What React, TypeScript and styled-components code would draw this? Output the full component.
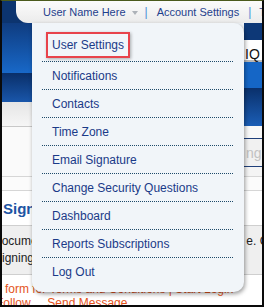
import styled, { createGlobalStyle } from "styled-components";

const GlobalStyle = createGlobalStyle`
  html, body {
    margin: 0;
    padding: 0;
    background: #fff;
  }
  body {
    font-family: "Liberation Sans", Arial, sans-serif;
  }
`;

const Frame = styled.div`
  position: relative;
  width: 264px;
  height: 307px;
  box-sizing: border-box;
  border: 2px solid #0a0a0a;
  border-top: 1px solid #4b5a1c;
  overflow: hidden;
  display: flex;
  flex-direction: column;
  background: #fff;
`;

const TopStrip = styled.div`
  height: 22px;
  flex: none;
  display: flex;
  padding-left: 14px;
  background: #0c346f;
`;

const Tab = styled.div`
  flex: 1;
  display: flex;
  align-items: center;
  padding-left: 27px;
  border-bottom-left-radius: 12px;
  background: linear-gradient(#fbfbfb, #ebebeb);
  white-space: nowrap;
  overflow: hidden;
  font-size: 11px;
  color: #1f3f8d;
`;

const Caret = styled.span`
  width: 0;
  height: 0;
  margin-left: 6px;
  margin-top: 2px;
  border-left: 3.5px solid transparent;
  border-right: 3.5px solid transparent;
  border-top: 4px solid #adb2b8;
`;

const Pipe = styled.span<{ $left: number; $right: number }>`
  margin: 0 ${(p) => p.$right}px 0 ${(p) => p.$left}px;
  color: #4a8fd6;
  font-size: 12px;
`;

const Banner = styled.div`
  height: 153px;
  flex: none;
  display: flex;
`;

const Column = styled.div<{ $width: number }>`
  width: ${(p) => p.$width}px;
  flex: none;
  display: flex;
  flex-direction: column;
  overflow: hidden;
`;

const Middle = styled.div`
  flex: 1;
  background: #f1f5f9;
`;

const Band = styled.div<{ $h: number; $bg: string; $line?: string }>`
  height: ${(p) => p.$h}px;
  flex: none;
  background: ${(p) => p.$bg};
  ${(p) => (p.$line ? `border-bottom: 1px solid ${p.$line};` : "")}
`;

const Fill = styled.div<{ $bg: string }>`
  flex: 1;
  background: ${(p) => p.$bg};
`;

const TitleBox = styled.div`
  height: 22px;
  flex: none;
  box-sizing: border-box;
  padding: 6px 0 0 1px;
  background: #fff;
  border-bottom: 2px solid #b9b9b9;
  font-size: 14px;
  line-height: 16px;
  color: #111;
  white-space: nowrap;
`;

const SearchBox = styled.div`
  height: 27px;
  flex: none;
  display: flex;
  align-items: center;
  padding-left: 2px;
  background: #f1f1f1;
  border-bottom: 1px solid #1f3f7a;
  font-size: 14px;
  color: #c2c2c2;
  white-space: nowrap;
`;

const ThinRow = styled.div`
  height: 13px;
  flex: none;
  background: #fbfbfb;
  border-top: 1px solid #d6d6d6;
  border-bottom: 1px solid #d6d6d6;
`;

const HeadingRow = styled.div`
  height: 34px;
  flex: none;
  display: flex;
  align-items: center;
  padding-left: 1px;
  background: #fff;
  border-bottom: 1px solid #cfcfcf;
  font-size: 15px;
  font-weight: bold;
  color: #1d55a3;
  white-space: nowrap;
`;

const DocsRow = styled.div`
  height: 49px;
  flex: none;
  box-sizing: border-box;
  padding-top: 7px;
  background: #efefef;
  border-bottom: 1px solid #cfcfcf;
  font-size: 12px;
  line-height: 17px;
  color: #222;
`;

const TextLine = styled.div<{ $indent: number }>`
  display: flex;
  justify-content: space-between;
  margin-left: ${(p) => p.$indent}px;
  white-space: nowrap;
`;

const Cut = styled.span`
  margin-right: -9px;
`;

const Footer = styled.div`
  flex: 1;
  padding-top: 7px;
  background: #fff;
  font-size: 12px;
  line-height: 14px;
  color: #e4541c;
`;

const FooterLine = styled.div<{ $indent: number }>`
  margin-left: ${(p) => p.$indent}px;
  white-space: nowrap;
`;

const Menu = styled.ul`
  position: absolute;
  left: 30px;
  top: 22px;
  width: 212px;
  box-sizing: border-box;
  margin: 0;
  padding: 11px 11px 7px 10px;
  list-style: none;
  background: #f1f5f9;
  border-radius: 0 10px 10px 10px;
  box-shadow: 1px 2px 4px rgba(0, 0, 0, 0.4);
`;

const MenuItem = styled.li`
  height: 27px;
  display: flex;
  align-items: center;
  padding-left: 10px;
  border-bottom: 1px dotted #1e4a6a;
  font-size: 12px;
  color: #1a3a88;
  white-space: nowrap;

  &:last-child {
    border-bottom: none;
  }
`;

const Highlight = styled.span`
  display: inline-block;
  margin: 0 0 5px -6px;
  padding: 4px;
  line-height: 14px;
  border: 2px solid #e8434b;
  box-shadow: 1px 1px 3px rgba(0, 0, 0, 0.3);
`;

const menuItems = [
  "Notifications",
  "Contacts",
  "Time Zone",
  "Email Signature",
  "Change Security Questions",
  "Dashboard",
  "Reports Subscriptions",
  "Log Out",
];

const App = () => {
  return (
    <>
      <GlobalStyle />
      <Frame>
        <TopStrip>
          <Tab>
            User Name Here
            <Caret />
            <Pipe $left={7} $right={9}>
              |
            </Pipe>
            Account Settings
            <Pipe $left={9} $right={8}>
              |
            </Pipe>
            Time Zone
          </Tab>
        </TopStrip>
        <Banner>
          <Column $width={30}>
            <Band $h={50} $bg="linear-gradient(#0f3c80, #1868c8)" />
            <Band $h={29} $bg="linear-gradient(#0a2f69, #1956aa)" />
            <Band $h={24} $bg="linear-gradient(#e5e5e5, #f6f6f6)" $line="#c8c8c8" />
            <Fill $bg="#fafafa" />
          </Column>
          <Middle />
          <Column $width={18}>
            <Band $h={17} $bg="#0d3877" />
            <TitleBox>IQ Portal</TitleBox>
            <Band $h={26} $bg="#1566c6" />
            <Band $h={38} $bg="linear-gradient(#0a306b, #1b5eb6)" />
            <Band $h={12} $bg="#f8f8f8" $line="#1f3f7a" />
            <SearchBox>ng text</SearchBox>
            <Fill $bg="#f4f4f4" />
          </Column>
        </Banner>
        <ThinRow />
        <HeadingRow>Signing</HeadingRow>
        <DocsRow>
          <TextLine $indent={-9}>
            <span>Documents</span>
            <Cut>e. Cl</Cut>
          </TextLine>
          <TextLine $indent={-8}>Signing</TextLine>
        </DocsRow>
        <Footer>
          <FooterLine $indent={3}>form for Terms and Conditions | Start Login</FooterLine>
          <FooterLine $indent={-6}>Follow&nbsp;&nbsp;&nbsp;&nbsp;&nbsp;Send Message</FooterLine>
        </Footer>
        <Menu>
          <MenuItem>
            <Highlight>User Settings</Highlight>
          </MenuItem>
          {menuItems.map((item) => (
            <MenuItem key={item}>{item}</MenuItem>
          ))}
        </Menu>
      </Frame>
    </>
  );
};

export default App;
